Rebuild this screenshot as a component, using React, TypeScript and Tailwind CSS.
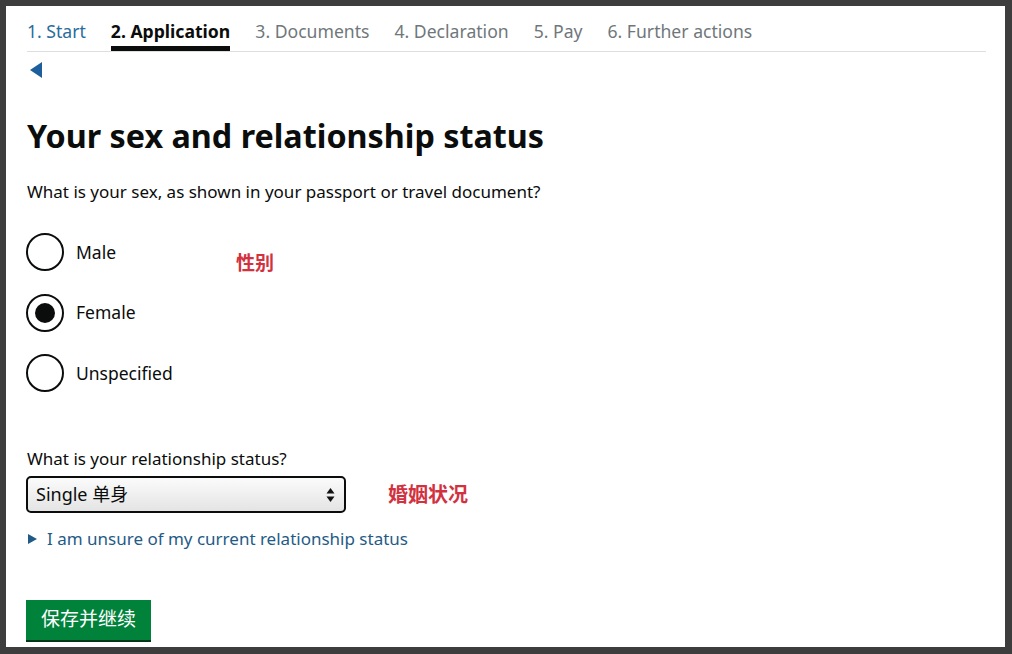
import React from "react";

const steps = [
  { label: "1. Start", state: "done" },
  { label: "2. Application", state: "current" },
  { label: "3. Documents", state: "todo" },
  { label: "4. Declaration", state: "todo" },
  { label: "5. Pay", state: "todo" },
  { label: "6. Further actions", state: "todo" },
];

const sexOptions = ["Male", "Female", "Unspecified"];

const font = { fontFamily: '"Noto Sans", "Noto Sans CJK SC", sans-serif' };

export default function App() {
  return (
    <div className="w-[1012px] h-[654px] bg-[#3d3d3d] pt-[6px] pl-[6px] pr-[7px] pb-[7px]" style={font}>
      <div className="h-full bg-white pl-[21px] pr-[19px] overflow-hidden">
        {/* progress tabs */}
        <nav className="flex border-b border-[#dedede] h-[46px] items-stretch">
          {steps.map((s) => (
            <div
              key={s.label}
              className={`mr-[25px] pt-[14px] text-[17.6px] leading-[22px] border-b-[5px] ${
                s.state === "current"
                  ? "font-bold text-[#0b0c0c] border-[#0b0c0c]"
                  : s.state === "done"
                  ? "text-[#2b6c9b] border-transparent"
                  : "text-[#6f777b] border-transparent"
              }`}
            >
              {s.label}
            </div>
          ))}
        </nav>

        <div className="pt-[9px]">
          <svg width="14" height="18" viewBox="0 0 14 18" className="ml-[2px]">
            <polygon points="13,1 13,17 1,9" fill="#1d5f9c" />
          </svg>
        </div>

        <h1 className="mt-[36px] text-[32.3px] leading-[40px] font-bold text-[#0b0c0c]">
          Your sex and relationship status
        </h1>

        <p className="mt-[25px] text-[17px] leading-[24px] text-[#0b0c0c]">
          What is your sex, as shown in your passport or travel document?
        </p>

        <div className="flex mt-[29px]">
          <div className="w-[209px] flex flex-col gap-[22.5px]">
            {sexOptions.map((o) => (
              <label key={o} className="flex items-center h-[38px]">
                <span className="w-[38px] h-[38px] rounded-full border-2 border-[#0b0c0c] flex items-center justify-center -ml-[1px]">
                  {o === "Female" && <span className="w-[20px] h-[20px] rounded-full bg-[#0b0c0c]" />}
                </span>
                <span className="ml-[12px] text-[17.5px] text-[#0b0c0c]">{o}</span>
              </label>
            ))}
          </div>
          <div className="mt-[16px] leading-[28px] text-[19px] font-bold text-[#d2323f]">性别</div>
        </div>

        <p className="mt-[55px] text-[17px] leading-[24px] text-[#0b0c0c]">What is your relationship status?</p>

        <div className="flex items-center mt-[5px]">
          <div className="-ml-[1px] w-[320px] h-[37px] rounded-[5px] border-2 border-[#0b0c0c] bg-gradient-to-b from-[#fbfbfb] to-[#e4e4e4] flex items-center justify-between pl-[8px] pr-[9px]">
            <span className="text-[18px] text-[#0b0c0c]">Single 单身</span>
            <svg width="9" height="16" viewBox="0 0 9 16">
              <polygon points="4.5,1 8.5,6.5 0.5,6.5" fill="#111" />
              <polygon points="4.5,15 8.5,9.5 0.5,9.5" fill="#111" />
            </svg>
          </div>
          <div className="ml-[42px] text-[20px] font-bold text-[#d2323f]">婚姻状况</div>
        </div>

        <div className="flex items-center mt-[13px] text-[17px] text-[#1f5b86]">
          <svg width="11" height="12" viewBox="0 0 11 12">
            <polygon points="1,1 10,6 1,11" fill="#1f5b86" />
          </svg>
          <span className="ml-[9px]">I am unsure of my current relationship status</span>
        </div>

        <button className="mt-[48px] -ml-[1px] h-[40px] px-[15px] bg-[#00823b] text-white text-[19px] shadow-[0_2px_0_#003618]">
          保存并继续
        </button>
      </div>
    </div>
  );
}
